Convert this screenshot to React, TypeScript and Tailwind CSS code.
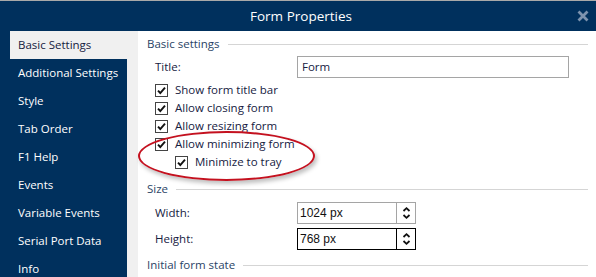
import React from "react";

const NAVY = "bg-[#00305d]";

function Check() {
  return (
    <span className="w-[13px] h-[13px] border border-[#444] bg-white flex items-center justify-center shrink-0">
      <svg width="11" height="11" viewBox="0 0 11 11">
        <path d="M2 5.6 L4.3 8 L9 2.6" fill="none" stroke="#111" strokeWidth="1.9" />
      </svg>
    </span>
  );
}

function CheckRow({ label, indent = false }: { label: string; indent?: boolean }) {
  return (
    <div className={`h-[18px] flex items-center gap-[7px] ${indent ? "pl-[28px]" : "pl-[8px]"}`}>
      <Check />
      <span>{label}</span>
    </div>
  );
}

function Header({ text }: { text: string }) {
  return (
    <div className="h-[18px] flex items-center gap-[8px] text-[#2a4466]">
      <span>{text}</span>
      <div className="flex-1 h-px bg-[#d5d5d5]" />
    </div>
  );
}

function Spin({ value, focused }: { value: string; focused?: boolean }) {
  return (
    <div className={`w-[119px] h-[22px] flex border ${focused ? "border-black" : "border-[#a5a5a5]"} bg-white`}>
      <div className="flex-1 flex items-center pl-[2px] font-['Liberation_Sans'] text-[12px] text-[#111]">{value}</div>
      <div className={`w-[19px] border-l ${focused ? "border-black" : "border-[#a5a5a5]"} flex items-center justify-center`}>
        <svg width="9" height="14" viewBox="0 0 9 14">
          <path d="M1.5 5 L4.5 2.2 L7.5 5" fill="none" stroke="#111" strokeWidth="1.8" />
          <path d="M1.5 9 L4.5 11.8 L7.5 9" fill="none" stroke="#111" strokeWidth="1.8" />
        </svg>
      </div>
    </div>
  );
}

const items = [
  "Basic Settings",
  "Additional Settings",
  "Style",
  "Tab Order",
  "F1 Help",
  "Events",
  "Variable Events",
  "Serial Port Data",
  "Info",
];

export default function App() {
  return (
    <div className="w-[596px] h-[277px] overflow-hidden flex flex-col bg-white font-['Open_Sans',sans-serif] text-[11.5px] text-[#16213f]">
      <div className="h-px bg-[#a9a9a9]" />
      <div className={`h-[30px] ${NAVY} grid grid-cols-[1fr_auto_1fr] items-center`}>
        <div />
        <div className="text-[13.5px] text-white pl-[6px]">Form Properties</div>
        <div className="justify-self-end pr-[7px] flex items-center">
          <svg width="12" height="12" viewBox="0 0 12 12">
            <path d="M1.5 1.5 L10.5 10.5 M10.5 1.5 L1.5 10.5" stroke="#7d93ae" strokeWidth="2.8" />
          </svg>
        </div>
      </div>
      <div className="flex flex-1 min-h-0">
        <div className="w-[138px] bg-[#f0f0f0] flex">
          <div className={`w-[127px] ${NAVY} flex flex-col`}>
            {items.map((it, i) =>
              i === 0 ? (
                <div key={it} className="ml-[10px] w-[128px] h-[28px] shrink-0 bg-[#f0f0f0] flex items-center pl-[8px] text-[#16213f]">
                  {it}
                </div>
              ) : (
                <div key={it} className="h-[28px] shrink-0 flex items-center pl-[18px] text-white">
                  {it}
                </div>
              )
            )}
          </div>
        </div>
        <div className="flex-1 flex flex-col pl-[9px] pr-[8px] pt-[4px]">
          <Header text="Basic settings" />
          <div className="mt-[3px] h-[22px] flex items-center pl-[8px]">
            <span className="w-[142px]">Title:</span>
            <div className="w-[272px] h-[22px] border border-[#a5a5a5] flex items-center pl-[4px]">Form</div>
          </div>
          <div className="mt-[3px]">
            <CheckRow label="Show form title bar" />
            <CheckRow label="Allow closing form" />
            <CheckRow label="Allow resizing form" />
            <div className="relative">
              <CheckRow label="Allow minimizing form" />
              <CheckRow label="Minimize to tray" indent />
              <div className="absolute left-[-9px] top-[-4px] w-[177px] h-[50px] rounded-[50%] border-2 border-[#c4111f] shadow-[2px_3px_4px_rgba(0,0,0,0.25)] pointer-events-none" />
            </div>
          </div>
          <div className="mt-[9px]">
            <Header text="Size" />
          </div>
          <div className="mt-[4px] flex items-center pl-[8px]">
            <span className="w-[142px]">Width:</span>
            <Spin value="1024 px" />
          </div>
          <div className="mt-[4px] flex items-center pl-[8px]">
            <span className="w-[142px]">Height:</span>
            <Spin value="768 px" focused />
          </div>
          <div className="mt-[6px]">
            <Header text="Initial form state" />
          </div>
        </div>
      </div>
    </div>
  );
}
